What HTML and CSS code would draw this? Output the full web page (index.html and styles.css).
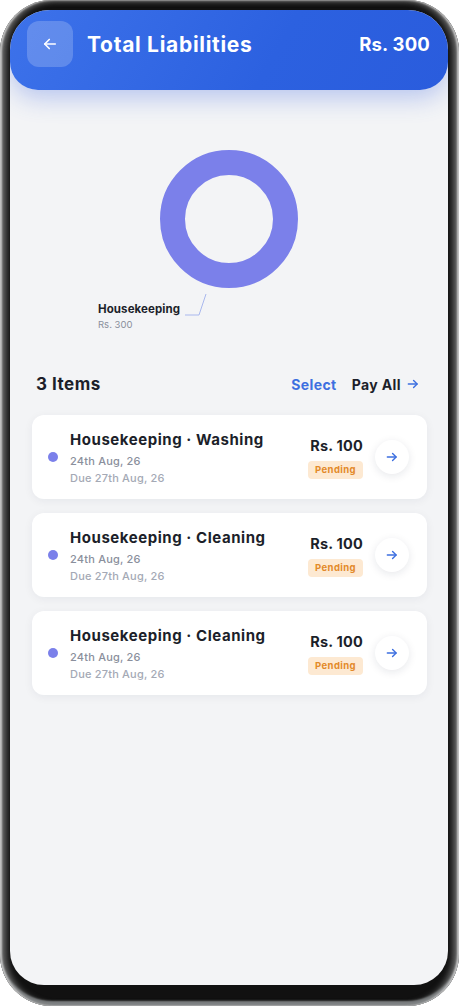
FILE: index.html
```html
<!DOCTYPE html>
<html>
<head>
<meta charset="utf-8">
<link rel="stylesheet" href="styles.css">
</head>
<body>
<div class="phone">
  <div class="screen">
    <header class="header">
      <button class="back" aria-label="Back">
        <svg width="18" height="18" viewBox="0 0 24 24" fill="none" stroke="#fff" stroke-width="2.2" stroke-linecap="round" stroke-linejoin="round"><path d="M19 12H5"/><path d="M11 6l-6 6 6 6"/></svg>
      </button>
      <h1 class="title">Total Liabilities</h1>
      <div class="total">Rs. 300</div>
    </header>

    <section class="chart">
      <svg class="chart-svg" width="438" height="190" viewBox="0 0 438 190">
        <circle cx="219" cy="69" r="56.5" fill="none" stroke="#7b80ea" stroke-width="25"/>
        <polyline points="196,144 189,165 175,165" fill="none" stroke="#a9b8ee" stroke-width="1"/>
      </svg>
      <div class="chart-label">
        <div class="chart-name">Housekeeping</div>
        <div class="chart-value">Rs. 300</div>
      </div>
    </section>

    <section class="list">
      <div class="list-head">
        <div class="count">3 Items</div>
        <div class="actions">
          <span class="select">Select</span>
          <span class="payall">Pay All
            <svg width="14" height="14" viewBox="0 0 24 24" fill="none" stroke="#3d6fe0" stroke-width="2.4" stroke-linecap="round" stroke-linejoin="round"><path d="M4 12h15"/><path d="M13 6l6 6-6 6"/></svg>
          </span>
        </div>
      </div>

      <div class="card">
        <span class="dot"></span>
        <div class="info">
          <div class="name">Housekeeping · Washing</div>
          <div class="date">24th Aug, 26</div>
          <div class="due">Due 27th Aug, 26</div>
        </div>
        <div class="amount">
          <div class="price">Rs. 100</div>
          <span class="badge">Pending</span>
        </div>
        <button class="go" aria-label="Open">
          <svg width="14" height="14" viewBox="0 0 24 24" fill="none" stroke="#3d6fe0" stroke-width="2.4" stroke-linecap="round" stroke-linejoin="round"><path d="M4 12h15"/><path d="M13 6l6 6-6 6"/></svg>
        </button>
      </div>

      <div class="card">
        <span class="dot"></span>
        <div class="info">
          <div class="name">Housekeeping · Cleaning</div>
          <div class="date">24th Aug, 26</div>
          <div class="due">Due 27th Aug, 26</div>
        </div>
        <div class="amount">
          <div class="price">Rs. 100</div>
          <span class="badge">Pending</span>
        </div>
        <button class="go" aria-label="Open">
          <svg width="14" height="14" viewBox="0 0 24 24" fill="none" stroke="#3d6fe0" stroke-width="2.4" stroke-linecap="round" stroke-linejoin="round"><path d="M4 12h15"/><path d="M13 6l6 6-6 6"/></svg>
        </button>
      </div>

      <div class="card">
        <span class="dot"></span>
        <div class="info">
          <div class="name">Housekeeping · Cleaning</div>
          <div class="date">24th Aug, 26</div>
          <div class="due">Due 27th Aug, 26</div>
        </div>
        <div class="amount">
          <div class="price">Rs. 100</div>
          <span class="badge">Pending</span>
        </div>
        <button class="go" aria-label="Open">
          <svg width="14" height="14" viewBox="0 0 24 24" fill="none" stroke="#3d6fe0" stroke-width="2.4" stroke-linecap="round" stroke-linejoin="round"><path d="M4 12h15"/><path d="M13 6l6 6-6 6"/></svg>
        </button>
      </div>
    </section>
  </div>
</div>
</body>
</html>
```

FILE: styles.css
```css
* { box-sizing: border-box; }
html, body { margin: 0; padding: 0; background: #ffffff; }
body { font-family: "Inter", "Noto Sans", sans-serif; color: #1c1f2a; }

.phone {
  width: 459px;
  height: 1006px;
  border-radius: 52px;
  background: #111;
  padding: 10px 11px 21px 10px;
  box-shadow:
    inset 2px 0 2px #c4c4c4,
    inset -2px 0 2px #c4c4c4,
    inset 0 -5px 2px #7d8082,
    inset 6px 0 6px #6a6a6a,
    inset -6px 0 6px #6a6a6a;
}

.screen {
  height: 975px;
  background: #f3f4f6;
  border-radius: 40px 40px 34px 34px;
  overflow: hidden;
  position: relative;
}

.header {
  height: 80px;
  display: flex;
  align-items: center;
  padding: 0 18px 12px 17px;
  background: linear-gradient(120deg, #3d72ea 0%, #2c61e0 60%, #2a5cdd 100%);
  border-radius: 0 0 28px 28px;
  box-shadow: 0 8px 24px rgba(58, 100, 225, 0.32);
  position: relative;
  z-index: 1;
}

.back {
  width: 46px;
  height: 46px;
  border: none;
  border-radius: 12px;
  background: rgba(255, 255, 255, 0.2);
  display: flex;
  align-items: center;
  justify-content: center;
  padding: 0;
  flex: none;
}

.title {
  margin: 0 0 0 14px;
  font-size: 21px;
  font-weight: 700;
  color: #fff;
  flex: 1;
  letter-spacing: 0.7px;
}

.total {
  font-size: 18.5px;
  font-weight: 700;
  color: #fff;
  letter-spacing: 0.2px;
}

.chart {
  position: relative;
  height: 190px;
  margin-top: 60px;
  margin-bottom: 29px;
}
.chart-svg { display: block; }
.chart-label {
  position: absolute;
  left: 88px;
  top: 152px;
}
.chart-name {
  font-size: 11.5px;
  font-weight: 700;
  color: #1c1f2a;
  line-height: 14px;
  letter-spacing: 0.1px;
}
.chart-value {
  font-size: 9.5px;
  color: #8a8f9c;
  line-height: 14px;
  margin-top: 2px;
}

.list {
  padding: 0 21px 0 22px;
}
.list-head {
  display: flex;
  align-items: center;
  justify-content: space-between;
  padding: 0 7px 0 4px;
  height: 30px;
  margin-bottom: 16px;
}
.count {
  font-size: 17px;
  font-weight: 700;
  color: #1c1f2a;
  letter-spacing: 0.5px;
}
.actions {
  display: flex;
  align-items: center;
  gap: 15px;
  font-size: 14px;
  font-weight: 700;
  letter-spacing: 0.4px;
}
.select { color: #3d6fe0; }
.payall {
  color: #1c1f2a;
  display: flex;
  align-items: center;
  gap: 5px;
}

.card {
  height: 84px;
  background: #fff;
  border-radius: 12px;
  box-shadow: 0 2px 10px rgba(20, 30, 60, 0.06);
  display: flex;
  align-items: center;
  padding: 0 18px 0 16px;
  margin-bottom: 14px;
}
.dot {
  width: 10px;
  height: 10px;
  border-radius: 50%;
  background: #7b80ea;
  flex: none;
}
.info {
  margin-left: 12px;
  flex: 1;
  padding-top: 3px;
}
.name {
  font-size: 15px;
  font-weight: 700;
  color: #1c1f2a;
  line-height: 20px;
  letter-spacing: 0.55px;
  margin-bottom: 3px;
}
.date {
  font-size: 11px;
  font-weight: 500;
  color: #8a8f9c;
  line-height: 17px;
  letter-spacing: 0.2px;
}
.due {
  font-size: 11px;
  font-weight: 500;
  color: #a4a9b5;
  line-height: 17px;
  letter-spacing: 0.2px;
}
.amount {
  display: flex;
  flex-direction: column;
  align-items: flex-end;
  gap: 5px;
  margin-top: 0;
}
.price {
  font-size: 14.5px;
  font-weight: 700;
  color: #1c1f2a;
  line-height: 20px;
  letter-spacing: 0.2px;
}
.badge {
  background: #fde9d2;
  color: #e38a2a;
  font-size: 9.5px;
  font-weight: 700;
  border-radius: 4px;
  padding: 2px 7px;
  line-height: 14px;
  letter-spacing: 0.4px;
}
.go {
  width: 34px;
  height: 34px;
  margin-left: 12px;
  border: none;
  border-radius: 50%;
  background: #fff;
  box-shadow: 0 2px 8px rgba(20, 30, 60, 0.10);
  display: flex;
  align-items: center;
  justify-content: center;
  padding: 0;
  flex: none;
}
```
